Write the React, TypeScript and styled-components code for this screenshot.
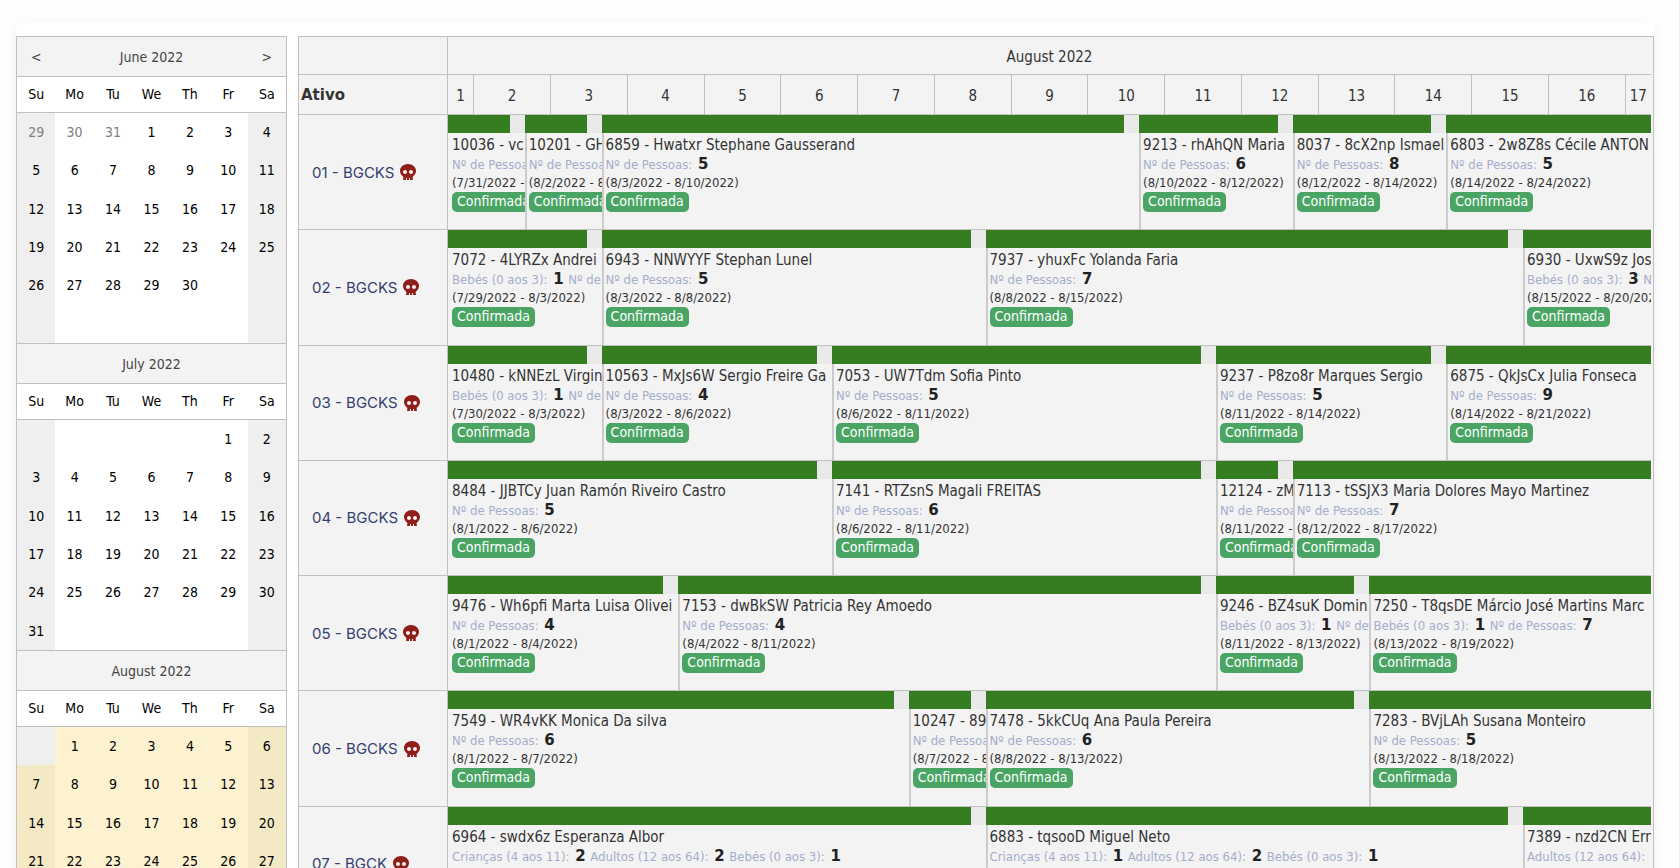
import React from "react";
import styled, { createGlobalStyle } from "styled-components";

const Global = createGlobalStyle`
  * { box-sizing: border-box; }
  body { margin: 0; background: #fefefe; font-family: "DejaVu Sans Condensed", Tahoma, sans-serif; color: #333; }
`;

const Page = styled.div`
  height: 100vh;
  overflow: hidden;
  padding: 23px 25px 0 16px;
  border-right: 1px solid #f1f1f1;
`;
const Card = styled.main`
  display: flex;
  align-items: flex-start;
  gap: 11px;
  padding-top: 13px;
  background: #fff;
  border-radius: 6px;
  box-shadow: 0 3px 12px rgba(0, 0, 0, 0.07);
`;

const Navigator = styled.aside`
  width: 271px;
  flex: none;
  border: 1px solid #c0c0c0;
  border-top: 0;
`;
const Month = styled.section`
  background: #fff;
`;
const MonthTitle = styled.header`
  height: 41px;
  display: grid;
  grid-template-columns: repeat(7, 1fr);
  align-items: center;
  border: solid #c0c0c0;
  border-width: 1px 0;
  background: #f3f3f3;
  font-size: 14px;
  color: #444;
`;
const MonthName = styled.h2`
  grid-area: 1 / 2 / 2 / 7;
  margin: 0;
  font: inherit;
  text-align: center;
`;
const NavButton = styled.button<{ $column: number }>`
  grid-row: 1;
  grid-column: ${(p) => p.$column};
  border: 0;
  padding: 0;
  background: none;
  font: inherit;
  color: inherit;
`;
const MonthTable = styled.table`
  width: 100%;
  border-collapse: separate;
  border-spacing: 0;
  table-layout: fixed;
  height: 266px;
  font-size: 14px;
  color: #000;
`;
const WeekdayCell = styled.th`
  height: 36px;
  padding: 0 0 2px;
  border-bottom: 1px solid #c0c0c0;
  font-weight: 400;
`;
const DayCell = styled.td<{ $weekend: boolean; $muted: boolean; $busy: boolean }>`
  height: 38px;
  padding: 0;
  text-align: center;
  color: ${(p) => (p.$muted ? "#808080" : "#000")};
  background: ${(p) =>
    p.$busy ? (p.$weekend ? "#f4e9c5" : "#fdf2cf") : p.$weekend ? "#efefef" : "#fff"};
`;

const Scheduler = styled.section`
  flex: 1;
  min-width: 0;
  border: solid #c0c0c0;
  border-width: 1px 1px 0;
  background: #f3f3f3;
  padding-right: 2px;
`;
const Line = styled.div<{ $height: number }>`
  display: flex;
  height: ${(p) => p.$height}px;
`;
const Side = styled.div`
  width: 149px;
  flex: none;
  display: flex;
  align-items: center;
  border: solid #c0c0c0;
  border-width: 0 1px 1px 0;
  padding-left: 2px;
  font-family: "DejaVu Sans", Tahoma, sans-serif;
  font-size: 15px;
  font-weight: 700;
`;
const Track = styled.div`
  flex: 1;
  min-width: 0;
  display: flex;
`;
const HeadCell = styled.div<{ $span: number }>`
  flex: ${(p) => p.$span} 1 0;
  min-width: 0;
  display: flex;
  align-items: center;
  justify-content: center;
  padding-top: 2px;
  border: solid #c0c0c0;
  border-width: 0 1px 1px 0;
  font-size: 15px;
  &:last-child { border-right: 0; }
`;
const Rows = styled.div`
  display: grid;
  grid-template-rows: repeat(7, 1fr);
  height: 807px;
`;
const Row = styled.div`
  display: flex;
  min-height: 0;
`;
const Asset = styled.a`
  width: 149px;
  flex: none;
  display: flex;
  align-items: center;
  gap: 6px;
  padding-left: 13px;
  border: solid #c0c0c0;
  border-width: 0 1px 1px 0;
  font-family: Inter, sans-serif;
  font-size: 15px;
  color: #33406f;
  text-decoration: none;
`;
const Booking = styled.article<{ $span: number }>`
  flex: ${(p) => p.$span} 1 0;
  min-width: 0;
  overflow: hidden;
  background: #f3f3f3;
  border-bottom: 1px solid #c0c0c0;
  white-space: nowrap;
`;
const Gauge = styled.div<{ $open: boolean }>`
  height: 18px;
  padding-right: ${(p) => (p.$open ? 0 : 15)}px;
  background: #e9e9e9;
`;
const GaugeFill = styled.div`
  height: 100%;
  background: #367d21;
`;
const Body = styled.div<{ $first: boolean }>`
  height: 100%;
  padding-top: 2px;
  border-left: ${(p) => (p.$first ? 0 : 2)}px solid #cbcbcb;
  padding-left: ${(p) => (p.$first ? 4 : 2)}px;
`;
const Guest = styled.div`
  overflow: hidden;
  font-size: 15px;
  line-height: 20px;
`;
const People = styled.div`
  overflow: hidden;
  font-size: 13px;
  line-height: 18px;
  color: #a5adcb;
`;
const Count = styled.b`
  margin: 0 1px 0 2px;
  font-family: "DejaVu Sans", Tahoma, sans-serif;
  font-size: 15px;
  line-height: 18px;
  color: #222;
`;
const Dates = styled.div`
  overflow: hidden;
  font-size: 13px;
  line-height: 18px;
`;
const Badge = styled.span`
  display: block;
  width: max-content;
  height: 20px;
  padding: 0 5px;
  border-radius: 5px;
  background: #4aa564;
  font-size: 14px;
  line-height: 19px;
  color: #fff;
`;

const Skull = () => (
  <svg width="16" height="16" viewBox="0 0 512 512" fill="#8f1d18" aria-hidden="true">
    <path d="M256 0C114.600 0 0 100.300 0 224c0 70.100 36.900 132.600 94.500 173.700 9.600 6.900 15.200 18.100 13.500 29.900l-9.400 66.200c-1.400 9.600 6 18.200 15.700 18.200H192v-56c0-4.400 3.600-8 8-8h16c4.400 0 8 3.600 8 8v56h64v-56c0-4.400 3.600-8 8-8h16c4.400 0 8 3.600 8 8v56h77.700c9.700 0 17.100-8.600 15.700-18.200l-9.400-66.200c-1.700-11.700 3.800-23 13.500-29.900C475.100 356.600 512 294.100 512 224 512 100.300 397.400 0 256 0zm-96 320c-35.300 0-64-28.700-64-64s28.700-64 64-64 64 28.700 64 64-28.700 64-64 64zm192 0c-35.300 0-64-28.700-64-64s28.700-64 64-64 64 28.700 64 64-28.700 64-64 64z" />
  </svg>
);

const weekdays = ["Su", "Mo", "Tu", "We", "Th", "Fr", "Sa"];

type MonthInfo = { name: string; offset: number; days: number; lead: number[]; busy?: boolean; nav?: boolean };
const months: MonthInfo[] = [
  { name: "June 2022", offset: 3, days: 30, lead: [29, 30, 31], nav: true },
  { name: "July 2022", offset: 5, days: 31, lead: [] },
  { name: "August 2022", offset: 1, days: 31, lead: [], busy: true },
];

const MonthView = ({ month }: { month: MonthInfo }) => (
  <Month>
    <MonthTitle>
      {month.nav && <NavButton $column={1} aria-label="Previous month">&lt;</NavButton>}
      <MonthName>{month.name}</MonthName>
      {month.nav && <NavButton $column={7} aria-label="Next month">&gt;</NavButton>}
    </MonthTitle>
    <MonthTable>
      <thead>
        <tr>{weekdays.map((d) => <WeekdayCell key={d}>{d}</WeekdayCell>)}</tr>
      </thead>
      <tbody>
        {Array.from({ length: 6 }, (_, week) => (
          <tr key={week}>
            {weekdays.map((name, col) => {
              const index = week * 7 + col;
              const day = index - month.offset + 1;
              const inMonth = day >= 1 && day <= month.days;
              return (
                <DayCell key={name} $weekend={col === 0 || col === 6} $muted={!inMonth} $busy={!!month.busy && inMonth}>
                  {inMonth ? day : month.lead[index]}
                </DayCell>
              );
            })}
          </tr>
        ))}
      </tbody>
    </MonthTable>
  </Month>
);

type Person = [string, number];
type Stay = { start: number; guest: string; dates: string; people: Person[] };
const total = (n: number): Person => ["Nº de Pessoas:", n];
const babies = (n: number): Person => ["Bebés (0 aos 3):", n];
const kids = (n: number): Person => ["Crianças (4 aos 11):", n];
const adults = (n: number): Person => ["Adultos (12 aos 64):", n];
const stay = (start: number, guest: string, dates: string, ...people: Person[]): Stay => ({ start, guest, dates, people });

const assets: { name: string; stays: Stay[] }[] = [
  { name: "01 - BGCKS", stays: [
    stay(0, "10036 - vc", "7/31/2022 - 8/2/2022", total(4)),
    stay(1, "10201 - GH", "8/2/2022 - 8/3/2022", total(4)),
    stay(2, "6859 - Hwatxr Stephane Gausserand", "8/3/2022 - 8/10/2022", total(5)),
    stay(9, "9213 - rhAhQN Maria", "8/10/2022 - 8/12/2022", total(6)),
    stay(11, "8037 - 8cX2np Ismael", "8/12/2022 - 8/14/2022", total(8)),
    stay(13, "6803 - 2w8Z8s Cécile ANTON", "8/14/2022 - 8/24/2022", total(5)),
  ] },
  { name: "02 - BGCKS", stays: [
    stay(0, "7072 - 4LYRZx Andrei", "7/29/2022 - 8/3/2022", babies(1), total(5)),
    stay(2, "6943 - NNWYYF Stephan Lunel", "8/3/2022 - 8/8/2022", total(5)),
    stay(7, "7937 - yhuxFc Yolanda Faria", "8/8/2022 - 8/15/2022", total(7)),
    stay(14, "6930 - UxwS9z Jos", "8/15/2022 - 8/20/2022", babies(3), total(5)),
  ] },
  { name: "03 - BGCKS", stays: [
    stay(0, "10480 - kNNEzL Virgin", "7/30/2022 - 8/3/2022", babies(1), total(5)),
    stay(2, "10563 - MxJs6W Sergio Freire Ga", "8/3/2022 - 8/6/2022", total(4)),
    stay(5, "7053 - UW7Tdm Sofia Pinto", "8/6/2022 - 8/11/2022", total(5)),
    stay(10, "9237 - P8zo8r Marques Sergio", "8/11/2022 - 8/14/2022", total(5)),
    stay(13, "6875 - QkJsCx Julia Fonseca", "8/14/2022 - 8/21/2022", total(9)),
  ] },
  { name: "04 - BGCKS", stays: [
    stay(0, "8484 - JJBTCy Juan Ramón Riveiro Castro", "8/1/2022 - 8/6/2022", total(5)),
    stay(5, "7141 - RTZsnS Magali FREITAS", "8/6/2022 - 8/11/2022", total(6)),
    stay(10, "12124 - zM", "8/11/2022 - 8/12/2022", total(4)),
    stay(11, "7113 - tSSJX3 Maria Dolores Mayo Martinez", "8/12/2022 - 8/17/2022", total(7)),
  ] },
  { name: "05 - BGCKS", stays: [
    stay(0, "9476 - Wh6pfi Marta Luisa Olivei", "8/1/2022 - 8/4/2022", total(4)),
    stay(3, "7153 - dwBkSW Patricia Rey Amoedo", "8/4/2022 - 8/11/2022", total(4)),
    stay(10, "9246 - BZ4suK Domin", "8/11/2022 - 8/13/2022", babies(1), total(4)),
    stay(12, "7250 - T8qsDE Márcio José Martins Marc", "8/13/2022 - 8/19/2022", babies(1), total(7)),
  ] },
  { name: "06 - BGCKS", stays: [
    stay(0, "7549 - WR4vKK Monica Da silva", "8/1/2022 - 8/7/2022", total(6)),
    stay(6, "10247 - 89", "8/7/2022 - 8/8/2022", total(4)),
    stay(7, "7478 - 5kkCUq Ana Paula Pereira", "8/8/2022 - 8/13/2022", total(6)),
    stay(12, "7283 - BVjLAh Susana Monteiro", "8/13/2022 - 8/18/2022", total(5)),
  ] },
  { name: "07 - BGCK", stays: [
    stay(0, "6964 - swdx6z Esperanza Albor", "8/1/2022 - 8/8/2022", kids(2), adults(2), babies(1)),
    stay(7, "6883 - tqsooD Miguel Neto", "8/8/2022 - 8/15/2022", kids(1), adults(2), babies(1)),
    stay(14, "7389 - nzd2CN Ern", "8/15/2022 - 8/22/2022", adults(2)),
  ] },
];

// The track is measured in thirds of a day: it opens at 16:00 on the 1st.
const TRACK_THIRDS = 47;

export default function App() {
  return (
    <Page>
      <Global />
      <Card>
        <Navigator>
          {months.map((m) => <MonthView key={m.name} month={m} />)}
        </Navigator>
        <Scheduler>
          <Line $height={38}>
            <Side />
            <Track><HeadCell $span={1}>August 2022</HeadCell></Track>
          </Line>
          <Line $height={40}>
            <Side>Ativo</Side>
            <Track>
              {Array.from({ length: 17 }, (_, i) => (
                <HeadCell key={i} $span={i === 0 || i === 16 ? 1 : 3}>{i + 1}</HeadCell>
              ))}
            </Track>
          </Line>
          <Rows>
            {assets.map((asset) => (
              <Row key={asset.name}>
                <Asset href="#">{asset.name}<Skull /></Asset>
                <Track>
                  {asset.stays.map((s, i) => {
                    const next = asset.stays[i + 1];
                    const span = (next ? next.start * 3 : TRACK_THIRDS) - s.start * 3;
                    return (
                      <Booking key={s.guest} $span={span}>
                        <Gauge $open={!next}><GaugeFill /></Gauge>
                        <Body $first={i === 0}>
                          <Guest>{s.guest}</Guest>
                          <People>
                            {s.people.map(([label, n]) => (
                              <React.Fragment key={label}>{label} <Count>{n}</Count> </React.Fragment>
                            ))}
                          </People>
                          <Dates>({s.dates})</Dates>
                          <Badge>Confirmada</Badge>
                        </Body>
                      </Booking>
                    );
                  })}
                </Track>
              </Row>
            ))}
          </Rows>
        </Scheduler>
      </Card>
    </Page>
  );
}
